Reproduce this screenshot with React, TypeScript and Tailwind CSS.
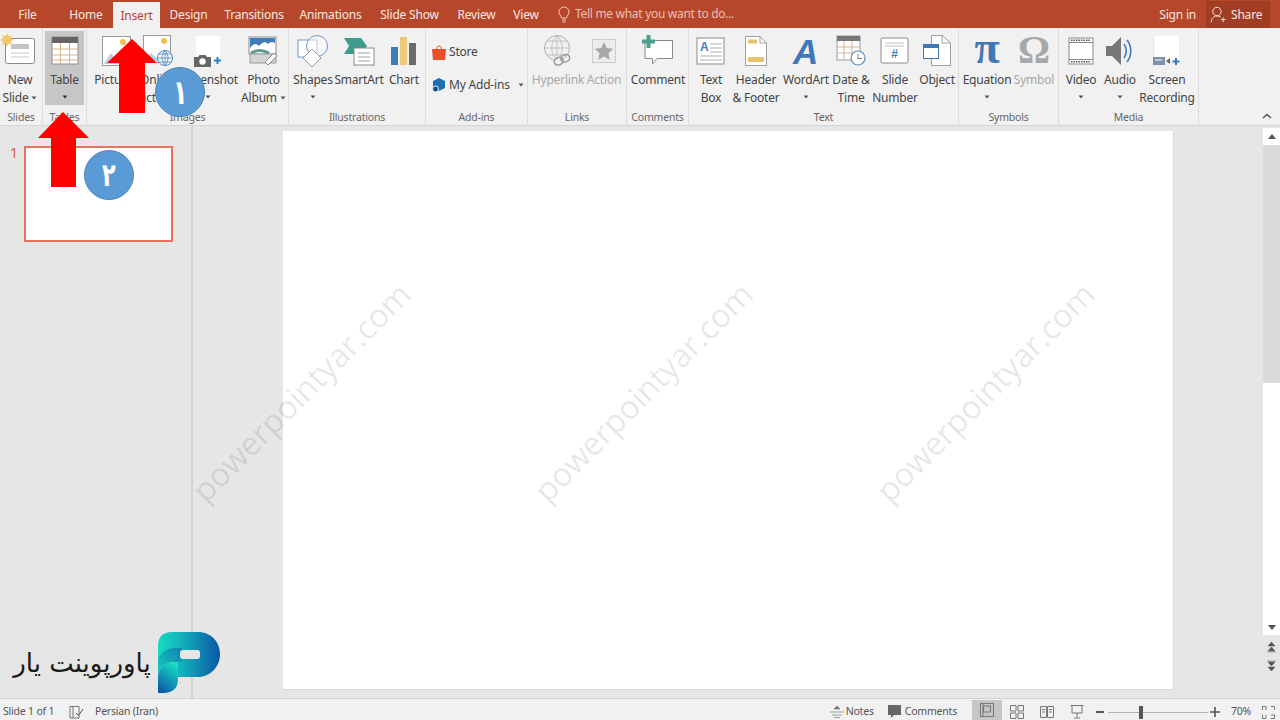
import React from "react";

const Caret = ({ c = "#555" }: { c?: string }) => (
  <svg width="6" height="4" viewBox="0 0 6 4" className="inline-block"><path d="M0.5 0.5H5.5L3 3.5Z" fill={c} /></svg>
);

type BtnProps = { w: string; icon?: React.ReactNode; l1: string; l2?: React.ReactNode; dim?: boolean; active?: boolean };
const Btn = ({ w, icon, l1, l2, dim, active }: BtnProps) => (
  <div className={`${w} shrink-0 flex flex-col items-center mt-[3px] h-[74px] ${active ? "bg-[#c6c6c6]" : ""} ${dim ? "text-[#a8a8a8]" : "text-[#444444]"}`}>
    <div className="h-[40px] w-full flex items-center justify-center shrink-0">{icon}</div>
    <div className="h-[18px] leading-[18px] whitespace-nowrap">{l1}</div>
    <div className="h-[18px] leading-[18px] whitespace-nowrap flex items-center gap-[3px]">{l2}</div>
  </div>
);

const Group = ({ w, label, children, pl }: { w: string; label: string; children: React.ReactNode; pl?: string }) => (
  <div className={`${w} shrink-0 h-[98px] flex flex-col border-r border-[#dcdcdc]`}>
    <div className={`h-[78px] shrink-0 flex ${pl ?? ""}`}>{children}</div>
    <div className="h-[20px] leading-[22px] text-center text-[10.5px] text-[#666666] whitespace-nowrap">{label}</div>
  </div>
);

const NewSlideIcon = () => (
  <svg width="38" height="36" viewBox="0 0 38 36" className="-ml-[4px]">
    <rect x="6.5" y="5.5" width="29" height="25" rx="2" fill="#fff" stroke="#8a8a8a" />
    <rect x="12" y="11" width="18" height="5" fill="#c4c4c4" />
    <path d="M12 20H30M12 24H30" stroke="#c8c8c8" />
    <path d="M8 0l1.4 3.2L13 2l-1.4 3.2L15 7l-3.4 1.2L13 12l-3.6-1.6L8 14 6.6 10.4 3 12l1.4-3.8L1 7l3.4-1.8L3 2l3.6 1.2Z" fill="#f4c867" />
  </svg>
);
const TableIcon = () => (
  <svg width="28" height="30" viewBox="0 0 28 30">
    <rect x="1" y="1" width="26" height="27" fill="#fff" stroke="#8e8e8e" />
    <rect x="1" y="1" width="26" height="6" fill="#666666" />
    <path d="M1 13H27M1 19H27M1 24H27M9.5 7V28M18.5 7V28" stroke="#d6b48c" strokeWidth="1" />
  </svg>
);
const PicturesIcon = () => (
  <svg width="34" height="34" viewBox="0 0 34 34">
    <rect x="3.5" y="2.5" width="28" height="29" fill="#fff" stroke="#9a9a9a" />
    <circle cx="24" cy="8" r="3" fill="#f3c04e" />
    <path d="M5 30l7-11 6 7 4-3 8 7Z" fill="#b7cbe4" />
  </svg>
);
const OnlineIcon = () => (
  <svg width="32" height="34" viewBox="0 0 32 34">
    <rect x="1.5" y="1.5" width="27" height="27" fill="#fff" stroke="#9a9a9a" />
    <circle cx="22" cy="7" r="3" fill="#f3c04e" />
    <path d="M3 27l6-8 5 5 4-2 6 5Z" fill="#b7cbe4" />
    <circle cx="23" cy="24" r="7.5" fill="#fff" stroke="#4a86bd" />
    <path d="M15.5 24H30.5M23 16.5V31.5M17 20H29M17 28H29M23 16.5C19 20 19 28 23 31.5C27 28 27 20 23 16.5" fill="none" stroke="#4a86bd" strokeWidth="0.8" />
  </svg>
);
const ScreenshotIcon = () => (
  <svg width="30" height="32" viewBox="0 0 30 32">
    <rect x="3" y="1" width="24" height="24" fill="#fff" />
    <path d="M1 22h4l1.5-2h6l1.5 2h4v10H1Z" fill="#666666" />
    <circle cx="9.5" cy="26.500" r="3.200" fill="#fff" />
    <path d="M24.500 22v7M21 25.500h7" stroke="#2d7fc1" strokeWidth="2" />
  </svg>
);
const PhotoAlbumIcon = () => (
  <svg width="32" height="30" viewBox="0 0 32 30">
    <rect x="1" y="1" width="27" height="17" fill="#fff" stroke="#8a8a8a" />
    <path d="M2 12c4-5 6-5 9-2 3-4 7-5 9-2 2-2 4-3 7-1V2H2Z" fill="#3f7cba" />
    <path d="M2 18v9h26V18Z" fill="#d4d4d4" stroke="#9a9a9a" />
    <path d="M3 17c5-3 12-3 18 0" fill="none" stroke="#5d9a8f" strokeWidth="3" />
    <path d="M17 26l9-9 3 3-9 9Z" fill="#fff" stroke="#8a8a8a" />
  </svg>
);
const ShapesIcon = () => (
  <svg width="32" height="34" viewBox="0 0 32 34">
    <rect x="1" y="6" width="19" height="17" fill="#fff" stroke="#6f97c4" />
    <circle cx="20" cy="12" r="10.500" fill="#fff" fillOpacity="0.5" stroke="#6f97c4" />
    <path d="M15 15l9 9-9 9-9-9Z" fill="#fff" stroke="#9a9a9a" />
  </svg>
);
const SmartArtIcon = () => (
  <svg width="32" height="30" viewBox="0 0 32 30">
    <path d="M1 2h17l6 8-6 8H1l5-8Z" fill="#3f9c8c" />
    <rect x="11" y="12" width="20" height="17" fill="#fff" stroke="#8a8a8a" />
    <path d="M15 17H27M15 21H27M15 25H27" stroke="#a0a0a0" />
  </svg>
);
const ChartIcon = () => (
  <svg width="26" height="30" viewBox="0 0 26 30">
    <rect x="0" y="11" width="7" height="18" fill="#3f7cba" />
    <rect x="9" y="1" width="7" height="28" fill="#efc878" />
    <rect x="18" y="7" width="7" height="22" fill="#6a6a6a" />
  </svg>
);
const HyperlinkIcon = () => (
  <svg width="30" height="34" viewBox="0 0 30 34">
    <circle cx="14" cy="14" r="12.500" fill="none" stroke="#b0b0b0" />
    <path d="M1.500 14H26.500M14 1.500V26.500M4 7H24M4 21H24M14 1.500C7 8 7 20 14 26.500C21 20 21 8 14 1.500" fill="none" stroke="#b8b8b8" strokeWidth="0.8" />
    <rect x="11" y="24" width="9" height="7" rx="3.500" fill="#f1f1f1" stroke="#999999" strokeWidth="1.500" transform="rotate(-25 15 27)" />
    <rect x="18" y="21" width="9" height="7" rx="3.500" fill="none" stroke="#999999" strokeWidth="1.500" transform="rotate(-25 22 25)" />
  </svg>
);
const ActionIcon = () => (
  <svg width="28" height="28" viewBox="0 0 28 28">
    <rect x="2.500" y="2.500" width="23" height="23" fill="#ededed" stroke="#bdbdbd" strokeDasharray="2 1" />
    <path d="M14 5l2.800 6 6.400.8-4.700 4.400 1.200 6.500-5.700-3.200-5.700 3.200 1.200-6.500-4.700-4.400 6.400-.8Z" fill="#a8a8a8" />
  </svg>
);
const CommentIcon = () => (
  <svg width="32" height="32" viewBox="0 0 32 32">
    <path d="M3 5.500H30.500V23.500H15L10.500 29V23.500H3Z" fill="#fff" stroke="#8a8a8a" />
    <path d="M6.500 0V13M0 6.500H13" stroke="#4f9f8e" strokeWidth="4" />
  </svg>
);
const TextBoxIcon = () => (
  <svg width="30" height="30" viewBox="0 0 30 30">
    <rect x="1" y="2" width="27" height="26" fill="#fff" stroke="#8a8a8a" />
    <text x="4" y="15" fontSize="12" fontWeight="700" fill="#3f7cba" fontFamily="Liberation Sans">A</text>
    <path d="M14 8H26M14 12H26M14 16H26M4 20H26M4 24H26" stroke="#b0b0b0" />
  </svg>
);
const HeaderIcon = () => (
  <svg width="24" height="32" viewBox="0 0 24 32">
    <path d="M1.500 1.500H16L22.500 8V30.500H1.500Z" fill="#fff" stroke="#a0a0a0" />
    <path d="M16 1.500V8H22.500" fill="none" stroke="#a0a0a0" />
    <rect x="4" y="4.500" width="9" height="4" fill="#e6c36f" />
    <rect x="4" y="22" width="16" height="5" fill="#e6c36f" />
  </svg>
);
const WordArtIcon = () => (
  <svg width="30" height="32" viewBox="0 0 30 32" className="overflow-visible">
    <text x="2" y="29" fontSize="35" fontStyle="italic" fontWeight="700" fill="#3f78b8" fontFamily="Liberation Sans">A</text>
  </svg>
);
const DateIcon = () => (
  <svg width="30" height="32" viewBox="0 0 30 32">
    <rect x="1" y="1" width="23" height="24" fill="#fff" stroke="#9a9a9a" />
    <rect x="1" y="1" width="23" height="5" fill="#777777" />
    <path d="M1 12H24M1 18H24M8 6V25M16 6V25" stroke="#d6b48c" />
    <circle cx="22" cy="23" r="7" fill="#fff" stroke="#5b8cc0" strokeWidth="1.200" />
    <path d="M22 19V23.500H26" fill="none" stroke="#777" />
  </svg>
);
const SlideNumIcon = () => (
  <svg width="30" height="28" viewBox="0 0 30 28">
    <rect x="1" y="1" width="27" height="25" rx="1" fill="#fff" stroke="#8a8a8a" />
    <path d="M5 6H24M5 9H24" stroke="#c0c0c0" />
    <text x="14.500" y="21" textAnchor="middle" fontSize="12" fontWeight="700" fill="#3f7cba" fontFamily="Liberation Sans">#</text>
  </svg>
);
const ObjectIcon = () => (
  <svg width="30" height="34" viewBox="0 0 30 34">
    <path d="M9.500 1.500H20L28.500 9V31.500H9.500Z" fill="#fff" stroke="#a0a0a0" />
    <path d="M20 1.500V9H28.500" fill="none" stroke="#a0a0a0" />
    <rect x="1.500" y="10.500" width="15" height="14" fill="#fff" stroke="#3f78b8" />
    <rect x="1.500" y="10.500" width="15" height="3.500" fill="#3f78b8" />
  </svg>
);
const VideoIcon = () => (
  <svg width="26" height="28" viewBox="0 0 26 28">
    <rect x="1" y="1" width="24" height="26" fill="#fff" stroke="#8a8a8a" />
    <path d="M1 5.500H25M1 22.500H25" stroke="#8a8a8a" />
    <path d="M3 3.200H23M3 24.800H23" stroke="#555" strokeWidth="1.600" strokeDasharray="1.500 1" />
  </svg>
);
const AudioIcon = () => (
  <svg width="28" height="30" viewBox="0 0 28 30">
    <path d="M0 10H6L15 1V29L6 20H0Z" fill="#777777" />
    <path d="M18 8C21 12 21 18 18 22M21 4C26 10 26 20 21 26" fill="none" stroke="#3f7cba" strokeWidth="1.600" />
  </svg>
);
const ScreenRecIcon = () => (
  <svg width="30" height="32" viewBox="0 0 30 32">
    <rect x="3" y="1" width="24" height="24" fill="#fff" />
    <rect x="1" y="22" width="12" height="8" fill="#7d93ad" />
    <path d="M3 25H10" stroke="#fff" />
    <path d="M14 26l4-3v6Z" fill="#666" />
    <path d="M24 23v7M20.500 26.500h7" stroke="#2d7fc1" strokeWidth="2" />
  </svg>
);

const Tab = ({ w, children }: { w: string; children: React.ReactNode }) => (
  <div className={`${w} shrink-0 text-center whitespace-nowrap leading-[29px]`}>{children}</div>
);

const Watermark = ({ cls }: { cls: string }) => (
  <div className={`absolute ${cls} top-[368px] w-[340px] text-center -rotate-45 text-[32.5px] leading-[48px] text-black/10 [font-family:'Open_Sans',sans-serif] font-normal pointer-events-none whitespace-nowrap`}>powerpointyar.com</div>
);

export default function App() {
  return (
    <div className="relative w-[1280px] h-[720px] overflow-hidden flex flex-col bg-[#e6e6e6] text-[12px] [font-family:'Noto_Sans','Open_Sans',sans-serif] tracking-[-0.2px]">
      {/* title / tabs */}
      <div className="h-[28px] shrink-0 bg-[#b7472a] flex items-stretch text-[#f6e7e2]">
        <Tab w="w-[55px]">File</Tab>
        <Tab w="w-[58px] pl-[4px]">Home</Tab>
        <div className="w-[47px] shrink-0 mt-[2px] bg-[#f1f1f1] text-[#b7472a] text-center leading-[27px]">Insert</div>
        <Tab w="w-[57px]">Design</Tab>
        <Tab w="w-[74px]">Transitions</Tab>
        <Tab w="w-[79px]">Animations</Tab>
        <Tab w="w-[79px]">Slide Show</Tab>
        <Tab w="w-[55px]">Review</Tab>
        <Tab w="w-[44px]">View</Tab>
        <div className="ml-[10px] flex items-center gap-[5px] text-[#ecbfb2] tracking-[-0.3px]">
          <svg width="12" height="17" viewBox="0 0 12 17"><path d="M3.500 12C3 9.500 1 8.500 1 6a5 5 0 0 1 10 0c0 2.500-2 3.500-2.500 6ZM4 14H8M4.500 16H7.500" fill="none" stroke="#f0cfc5" /></svg>
          <span className="whitespace-nowrap">Tell me what you want to do...</span>
        </div>
        <div className="flex-1" />
        <div className="leading-[29px] whitespace-nowrap mr-[10px]">Sign in</div>
        <div className="w-[64px] mr-[10px] bg-[#a03d23] flex items-center gap-[5px] pl-[4px] mt-[1px] text-[#f6e7e2]">
          <svg width="16" height="18" viewBox="0 0 16 18"><circle cx="7" cy="5.500" r="4.200" fill="none" stroke="#f6e7e2" /><path d="M1 16.500c.5-4 2.500-6.500 6-6.500 1.500 0 2.500.3 3.500 1M11 13.500h4.500M13.200 11.500v4.500" fill="none" stroke="#f6e7e2" /></svg>
          <span>Share</span>
        </div>
      </div>

      {/* ribbon */}
      <div className="h-[98px] shrink-0 bg-[#f1f1f1] flex border-b border-[#d6d6d6] relative">
        <Group w="w-[43px]" label="Slides">
          <Btn w="w-[40px]" icon={<NewSlideIcon />} l1="New" l2={<>Slide <Caret /></>} />
        </Group>
        <Group w="w-[44px]" label="Tables" pl="pl-[2px]">
          <Btn w="w-[39px]" active icon={<TableIcon />} l1="Table" l2={<Caret c="#333" />} />
        </Group>
        <Group w="w-[202px]" label="Images" pl="pl-[4px]">
          <Btn w="w-[50px]" icon={<PicturesIcon />} l1="Pictures" />
          <Btn w="w-[34px]" icon={<OnlineIcon />} l1="Online" l2="Pictures" />
          <Btn w="w-[65px]" icon={<ScreenshotIcon />} l1="Screenshot" l2={<Caret />} />
          <Btn w="w-[47px]" icon={<PhotoAlbumIcon />} l1="Photo" l2={<>Album <Caret /></>} />
        </Group>
        <Group w="w-[137px]" label="Illustrations" pl="pl-[3px]">
          <Btn w="w-[42px]" icon={<ShapesIcon />} l1="Shapes" l2={<Caret />} />
          <Btn w="w-[50px]" icon={<SmartArtIcon />} l1="SmartArt" />
          <Btn w="w-[40px]" icon={<ChartIcon />} l1="Chart" />
        </Group>
        <Group w="w-[102px]" label="Add-ins" pl="pl-[6px]">
          <div className="flex flex-col text-[#444444]">
            <div className="mt-[15px] h-[18px] flex items-center gap-[3px]">
              <svg width="14" height="16" viewBox="0 0 14 16"><path d="M0 5H14L13 16H1Z" fill="#e8502a" /><path d="M4.500 5C4.500 1 9.500 1 9.500 5" fill="none" stroke="#e8502a" /></svg>
              <span>Store</span>
            </div>
            <div className="mt-[15px] h-[18px] flex items-center gap-[3px] whitespace-nowrap">
              <svg width="14" height="16" viewBox="0 0 14 16"><path d="M7 1l6 3v7l-6 3-6-3V4Z" fill="#1f6fb5" /><circle cx="3.500" cy="12" r="3" fill="#0f4f8f" stroke="#f1f1f1" /></svg>
              <span>My Add-ins</span>
              <span className="ml-[5px] flex"><Caret /></span>
            </div>
          </div>
        </Group>
        <Group w="w-[99px]" label="Links" pl="pl-[4px]">
          <Btn w="w-[52px]" dim icon={<HyperlinkIcon />} l1="Hyperlink" />
          <Btn w="w-[40px]" dim icon={<ActionIcon />} l1="Action" />
        </Group>
        <Group w="w-[62px]" label="Comments">
          <Btn w="w-[62px]" icon={<CommentIcon />} l1="Comment" />
        </Group>
        <Group w="w-[270px]" label="Text">
          <Btn w="w-[44px]" icon={<TextBoxIcon />} l1="Text" l2="Box" />
          <Btn w="w-[46px]" icon={<HeaderIcon />} l1="Header" l2="& Footer" />
          <Btn w="w-[54px]" icon={<WordArtIcon />} l1="WordArt" l2={<Caret />} />
          <Btn w="w-[36px]" icon={<DateIcon />} l1="Date &" l2="Time" />
          <Btn w="w-[52px]" icon={<SlideNumIcon />} l1="Slide" l2="Number" />
          <Btn w="w-[32px]" icon={<ObjectIcon />} l1="Object" />
        </Group>
        <Group w="w-[100px]" label="Symbols" pl="pl-[2px]">
          <Btn w="w-[52px]" icon={<span className="-mt-[7px] text-[46px] leading-[38px] text-[#3f78b8] [font-family:'Liberation_Serif',serif] font-bold">π</span>} l1="Equation" l2={<Caret />} />
          <Btn w="w-[42px]" dim icon={<span className="-mt-[3px] text-[40px] leading-[38px] text-[#a8a8a8] [font-family:'Liberation_Serif',serif] font-bold">Ω</span>} l1="Symbol" />
        </Group>
        <Group w="w-[140px]" label="Media" pl="pl-[2px]">
          <Btn w="w-[40px]" icon={<VideoIcon />} l1="Video" l2={<Caret />} />
          <Btn w="w-[38px]" icon={<AudioIcon />} l1="Audio" l2={<Caret />} />
          <Btn w="w-[56px]" icon={<ScreenRecIcon />} l1="Screen" l2="Recording" />
        </Group>
        <div className="flex-1 flex items-end justify-end pr-[8px] pb-[6px]">
          <svg width="10" height="6" viewBox="0 0 10 6"><path d="M1 5L5 1.500L9 5" fill="none" stroke="#555" strokeWidth="1.600" /></svg>
        </div>
      </div>

      {/* main */}
      <div className="flex-1 flex min-h-0">
        <div className="w-[191px] shrink-0 flex items-start pt-[20px] pl-[10px]">
          <span className="w-[14px] text-[14px] leading-[14px] text-[#d9603f]">1</span>
          <div className="w-[149px] h-[96px] bg-white border-2 border-[#e8735a]" />
        </div>
        <div className="w-[2px] shrink-0 bg-[#d2d2d2]" />
        <div className="flex-1 pl-[90px] pt-[5px] pr-[88px] pb-[8px]">
          <div className="w-[891px] h-[559px] bg-white border-r border-b border-[#dadada]" />
        </div>
        <div className="w-[18px] shrink-0 flex flex-col items-stretch pl-[1px]">
          <div className="h-[2px]" />
          <div className="h-[17px] bg-white flex items-center justify-center">
            <svg width="8" height="5" viewBox="0 0 8 5"><path d="M0 5L4 0L8 5Z" fill="#555" /></svg>
          </div>
          <div className="h-[238px] bg-[#dadada]" />
          <div className="h-[236px] bg-white" />
          <div className="h-[16px] bg-white flex items-center justify-center">
            <svg width="8" height="5" viewBox="0 0 8 5"><path d="M0 0L8 0L4 5Z" fill="#555" /></svg>
          </div>
          <div className="mt-[3px] h-[18px] flex items-center justify-center">
            <svg width="9" height="11" viewBox="0 0 9 11"><path d="M4.500 0L8 4H1ZM4.500 5L8 9H1ZM0 10H9" fill="#555" stroke="#555" strokeWidth="0.500" /></svg>
          </div>
          <div className="h-[18px] flex items-center justify-center">
            <svg width="9" height="11" viewBox="0 0 9 11"><path d="M0 1H9M1 2H8L4.500 6ZM1 7H8L4.500 11Z" fill="#555" stroke="#555" strokeWidth="0.500" /></svg>
          </div>
        </div>
      </div>

      {/* status bar */}
      <div className="h-[22px] shrink-0 bg-[#f1f1f1] border-t border-[#d2d2d2] pt-[5px] flex items-center text-[10.5px] text-[#555555]">
        <span className="ml-[3px] w-[66px] whitespace-nowrap">Slide 1 of 1</span>
        <svg width="15" height="13" viewBox="0 0 15 13"><path d="M1 .5H10V12H1ZM4 .5V12" fill="none" stroke="#777" /><path d="M7 7l2.500 2.500L14 3" fill="none" stroke="#555" /></svg>
        <span className="ml-[11px] whitespace-nowrap">Persian (Iran)</span>
        <div className="flex-1" />
        <svg width="14" height="12" viewBox="0 0 14 12"><path d="M7 0L10 3H4ZM0 6H14M2 9H12M4 11.500H10" fill="#777" stroke="#777" strokeWidth="0.700" /></svg>
        <span className="ml-[2px] whitespace-nowrap">Notes</span>
        <svg width="13" height="14" viewBox="0 0 13 14" className="ml-[14px]"><path d="M0 0H13V10H6L3 13V10H0Z" fill="#666" /></svg>
        <span className="ml-[4px] whitespace-nowrap">Comments</span>
        <div className="ml-[15px] w-[30px] h-[20px] self-end bg-[#c6c6c6] flex items-center justify-center">
          <svg width="14" height="14" viewBox="0 0 14 14"><rect x=".5" y=".5" width="13" height="13" fill="none" stroke="#777" /><rect x="3.500" y="3" width="7" height="6" fill="none" stroke="#777" /><path d="M3 .5V13.500" stroke="#777" /></svg>
        </div>
        <div className="w-[30px] flex justify-center">
          <svg width="14" height="14" viewBox="0 0 14 14"><path d="M.5 .5H6V6H.5ZM8 .5H13.500V6H8ZM.5 8H6V13.500H.5ZM8 8H13.500V13.500H8Z" fill="none" stroke="#777" /></svg>
        </div>
        <div className="w-[30px] flex justify-center">
          <svg width="14" height="14" viewBox="0 0 14 14"><path d="M.5 1.500H6.500V12.500H.5ZM7.500 1.500H13.500V12.500H7.500ZM2 4.500H5M2 7H5M9 4.500H12M9 7H12" fill="none" stroke="#777" /></svg>
        </div>
        <div className="w-[30px] flex justify-center">
          <svg width="14" height="14" viewBox="0 0 14 14"><path d="M.5 .5H13.500M2 .5V8H12V.5M7 8V12M4 13H10" fill="none" stroke="#777" /></svg>
        </div>
        <div className="ml-[4px] w-[8px] h-[2px] bg-[#555]" />
        <div className="ml-[4px] w-[100px] h-[1px] bg-[#b4b4b4] relative">
          <div className="absolute left-[31px] -top-[6px] w-[4px] h-[13px] bg-[#555]" />
        </div>
        <svg width="10" height="10" viewBox="0 0 10 10" className="ml-[2px]"><path d="M5 0V10M0 5H10" stroke="#555" strokeWidth="1.600" /></svg>
        <span className="ml-[11px] w-[22px] whitespace-nowrap">70%</span>
        <svg width="13" height="13" viewBox="0 0 13 13" className="ml-[9px] mr-[5px]"><path d="M.5 .5H4M9 .5H12.500V4M12.500 9V12.500H9M4 12.500H.5V9M.5 4V.5M4 4V.5M9 9H12.500M4 9V12.500" fill="none" stroke="#777" /></svg>
      </div>

      {/* watermarks */}
      <Watermark cls="left-[131px]" />
      <Watermark cls="left-[473px]" />
      <Watermark cls="left-[815px]" />

      {/* arrows and badges */}
      <svg width="52" height="76" viewBox="0 0 52 76" className="absolute left-[106px] top-[38px]">
        <path d="M26 1L51 25H39V75H13V25H1Z" fill="#ff0000" />
      </svg>
      <svg width="52" height="76" viewBox="0 0 52 76" className="absolute left-[38px] top-[112px]">
        <path d="M25 0L51 26H38V75H13V26H0Z" fill="#ff0000" />
      </svg>
      <div className="absolute left-[155px] top-[67px] w-[50px] h-[50px] rounded-full bg-[#5b9bd5] border border-[#4a86bd] flex items-center justify-center text-white text-[34px] font-bold [font-family:'DejaVu_Sans',sans-serif]"><span className="scale-x-[0.7]">۱</span></div>
      <div className="absolute left-[84px] top-[150px] w-[50px] h-[50px] rounded-full bg-[#5b9bd5] border border-[#4a86bd] flex items-center justify-center text-white text-[32px] font-bold [font-family:'DejaVu_Sans',sans-serif]"><span className="scale-x-[0.7]">۲</span></div>

      {/* logo */}
      <div className="absolute left-[12px] top-[632px] flex items-center gap-[6px]">
        <span dir="rtl" className="w-[140px] text-center text-[26px] leading-[62px] text-[#1a1a1a] whitespace-nowrap [font-family:'DejaVu_Sans',sans-serif]">پاورپوینت یار</span>
        <svg width="62" height="62" viewBox="0 0 62 62">
          <defs>
            <linearGradient id="pa" x1="0" y1="0" x2="1" y2="0"><stop offset="0" stopColor="#16dcc4" /><stop offset="0.450" stopColor="#12a8b8" /><stop offset="1" stopColor="#0a55a6" /></linearGradient>
            <linearGradient id="pm" x1="0" y1="1" x2="1" y2="0"><stop offset="0" stopColor="#16d0c2" /><stop offset="1" stopColor="#0e82ac" /></linearGradient>
            <linearGradient id="pb" x1="0.700" y1="0" x2="0.200" y2="1"><stop offset="0" stopColor="#16dcc4" /><stop offset="1" stopColor="#0b5aa8" /></linearGradient>
          </defs>
          <path d="M0 14Q0 0 14 0H40C53 0 62 10 62 22C62 35 52 45 40 45H20V30H0Z" fill="url(#pa)" />
          <path d="M0 30C0 22 8 16 18 16H24V30H18C8 30 0 36 0 44Z" fill="url(#pm)" />
          <path d="M0 44C0 36 8 30 18 30H20V48C20 56 14 61 6 61H0Z" fill="url(#pb)" />
          <rect x="22" y="18" width="20" height="9" rx="3" fill="#e6e6e6" />
        </svg>
      </div>
    </div>
  );
}
